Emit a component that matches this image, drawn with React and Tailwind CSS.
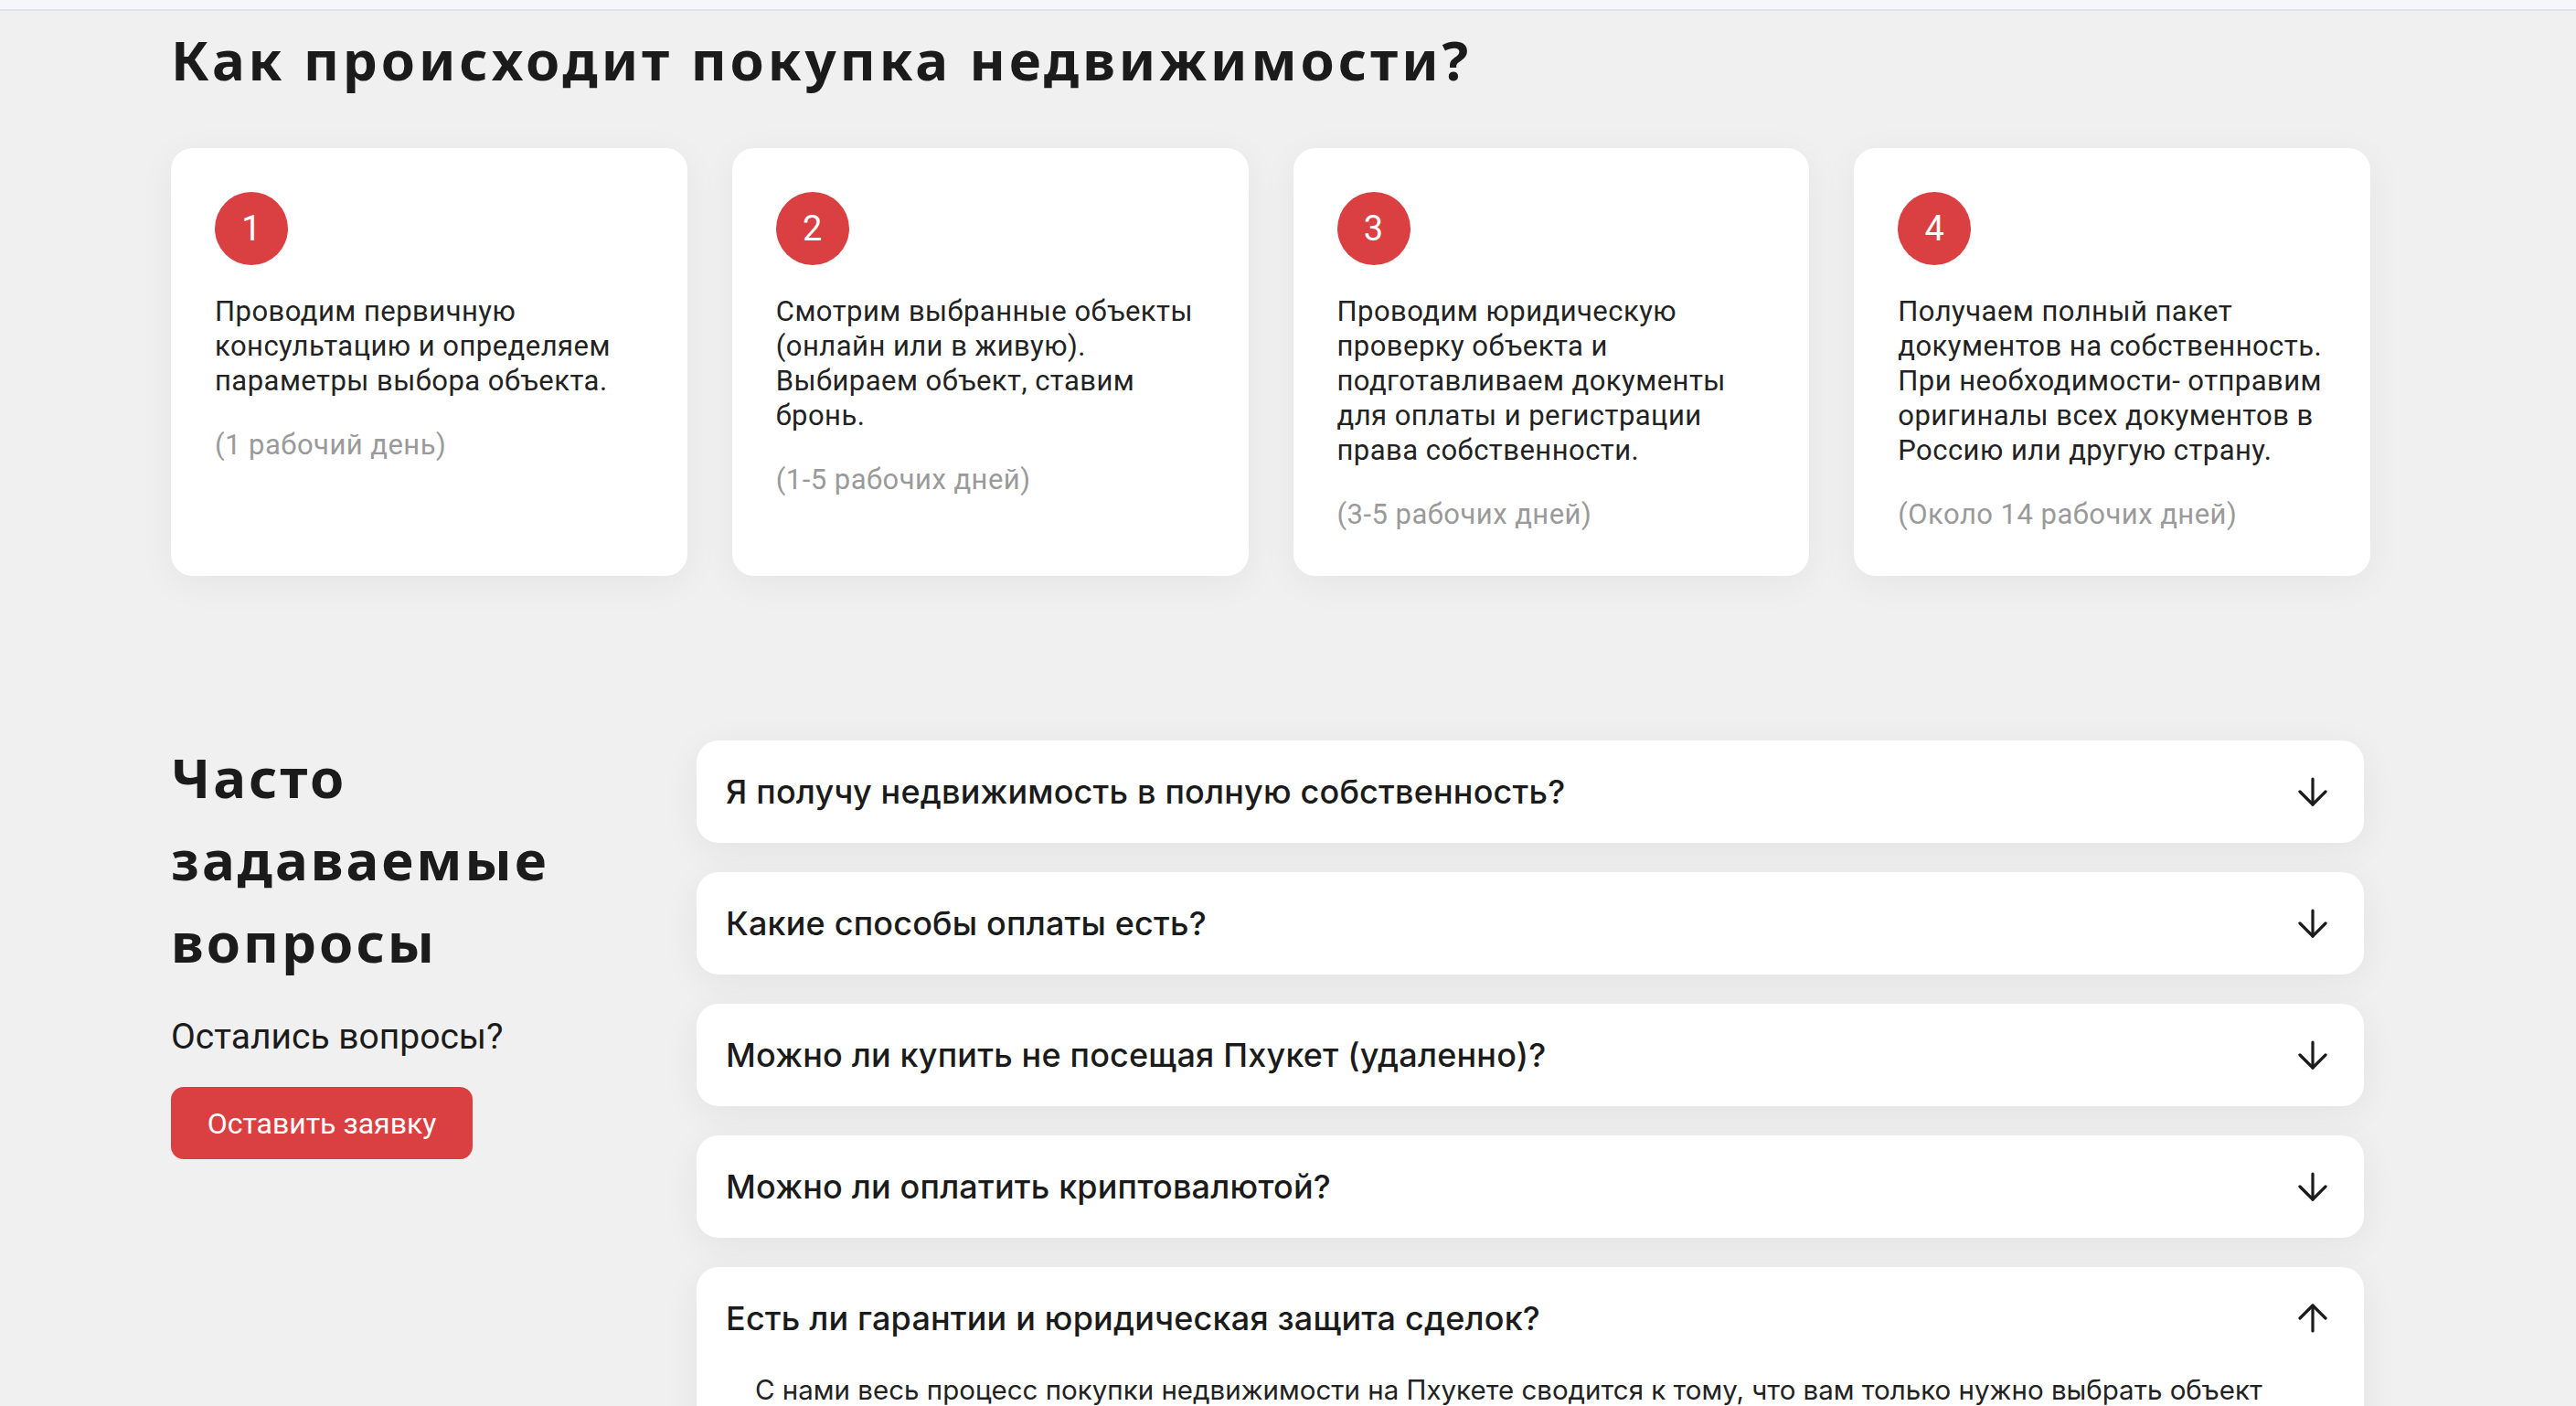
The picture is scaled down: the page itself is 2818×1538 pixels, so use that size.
import React, { useState } from "react";
import { ArrowDown, ArrowUp } from "lucide-react";

const steps = [
  {
    n: 1,
    lines: ["Проводим первичную", "консультацию и определяем", "параметры выбора объекта."],
    time: "(1 рабочий день)",
  },
  {
    n: 2,
    lines: ["Смотрим выбранные объекты", "(онлайн или в живую).", "Выбираем объект, ставим", "бронь."],
    time: "(1-5 рабочих дней)",
  },
  {
    n: 3,
    lines: [
      "Проводим юридическую",
      "проверку объекта и",
      "подготавливаем документы",
      "для оплаты и регистрации",
      "права собственности.",
    ],
    time: "(3-5 рабочих дней)",
  },
  {
    n: 4,
    lines: [
      "Получаем полный пакет",
      "документов на собственность.",
      "При необходимости- отправим",
      "оригиналы всех документов в",
      "Россию или другую страну.",
    ],
    time: "(Около 14 рабочих дней)",
  },
];

const faq = [
  {
    q: "Я получу недвижимость в полную собственность?",
    a: "Да, вы становитесь полноправным владельцем объекта, право собственности регистрируется на ваше имя.",
  },
  {
    q: "Какие способы оплаты есть?",
    a: "Банковский перевод, оплата наличными и другие удобные для вас варианты.",
  },
  {
    q: "Можно ли купить не посещая Пхукет (удаленно)?",
    a: "Да, мы проводим онлайн-показы и оформляем сделку дистанционно.",
  },
  {
    q: "Можно ли оплатить криптовалютой?",
    a: "Да, такая возможность есть для большинства объектов.",
  },
  {
    q: "Есть ли гарантии и юридическая защита сделок?",
    a: "С нами весь процесс покупки недвижимости на Пхукете сводится к тому, что вам только нужно выбрать объект недвижимости, а всю юридическую проверку и оформление документов мы берём на себя.",
  },
];

const App = () => {
  const [open, setOpen] = useState(4);

  return (
    <div className="min-h-screen bg-[#f0f0f0] font-['Roboto',sans-serif] text-[#222]">
      {/* top strip */}
      <div className="h-[12px] bg-[#f5f7fc] border-b-2 border-[#dfe4ec]" />

      <div className="ml-[187px] w-[2406px]">
        {/* Steps */}
        <h2 className="mt-[8px] font-['Noto_Sans',sans-serif] text-[60px] leading-[90px] font-bold tracking-[0.065em] text-[#1b1b1b]">
          Как происходит покупка недвижимости?
        </h2>

        <div className="mt-[52px] grid grid-cols-4 gap-[49px]">
          {steps.map((s) => (
            <div
              key={s.n}
              className="rounded-3xl bg-white p-12 shadow-[0_8px_40px_rgba(0,0,0,0.05)]"
            >
              <div className="flex h-20 w-20 items-center justify-center rounded-full bg-[#da3f41] text-[38px] text-white">
                {s.n}
              </div>
              <p className="mt-8 whitespace-nowrap text-[31px] leading-[38px] tracking-[0.015em] text-[#222]">
                {s.lines.map((l, i) => (
                  <React.Fragment key={i}>
                    {l}
                    {i < s.lines.length - 1 && <br />}
                  </React.Fragment>
                ))}
              </p>
              <p className="mt-8 text-[31px] leading-[38px] tracking-[0.015em] text-[#9a9a9a]">{s.time}</p>
            </div>
          ))}
        </div>

        {/* FAQ */}
        <div className="mt-[175px] flex">
          <div className="w-[575px] shrink-0">
            <h2 className="font-['Noto_Sans',sans-serif] text-[60px] leading-[90px] font-bold tracking-[0.05em] text-[#1b1b1b]">
              Часто
              <br />
              задаваемые
              <br />
              вопросы
            </h2>
            <p className="mt-[36px] text-[39px] leading-[47px] text-[#1b1b1b]">Остались вопросы?</p>
            <button className="mt-[31px] h-[79px] w-[330px] rounded-[14px] bg-[#da3f41] text-[32px] text-white">
              Оставить заявку
            </button>
          </div>

          <div className="mt-[5px] flex w-[1824px] flex-col gap-8 font-['Inter',sans-serif]">
            {faq.map((item, idx) => {
              const isOpen = open === idx;
              return (
                <div
                  key={idx}
                  className="rounded-3xl bg-white shadow-[0_8px_40px_rgba(0,0,0,0.06)]"
                >
                  <button
                    onClick={() => setOpen(isOpen ? -1 : idx)}
                    className="flex h-[112px] w-full items-center justify-between px-8 text-left"
                  >
                    <span className="text-[36px] font-medium tracking-[0.005em] text-[#1b1b1b]">{item.q}</span>
                    {isOpen ? (
                      <ArrowUp size={48} strokeWidth={1.6} className="text-[#1b1b1b]" />
                    ) : (
                      <ArrowDown size={48} strokeWidth={1.6} className="text-[#1b1b1b]" />
                    )}
                  </button>
                  {isOpen && (
                    <p className="pb-10 pl-16 pr-16 text-[29.5px] leading-[44px] text-[#222]">{item.a}</p>
                  )}
                </div>
              );
            })}
          </div>
        </div>
      </div>
    </div>
  );
};

export default App;
